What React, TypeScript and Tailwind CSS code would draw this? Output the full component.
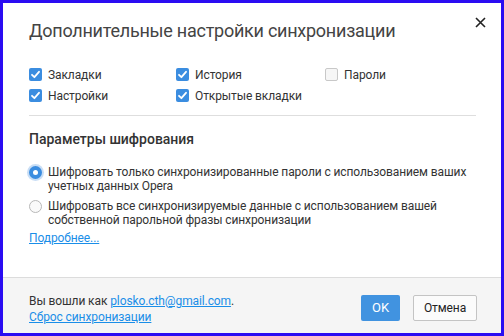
import React, { useState } from 'react';

type CheckProps = { label: string; checked: boolean; onToggle: () => void };

function Check({ label, checked, onToggle }: CheckProps) {
  return (
    <label className="flex items-center gap-[6px] cursor-pointer h-[21px] whitespace-nowrap" onClick={onToggle}>
      {checked ? (
        <span className="w-[13px] h-[13px] rounded-[2px] bg-[#3b8de0] flex items-center justify-center">
          <svg width="11" height="11" viewBox="0 0 11 11">
            <path d="M2 5.8 L4.4 8.2 L9 2.8" stroke="#fff" strokeWidth="1.8" fill="none" strokeLinecap="round" strokeLinejoin="round" />
          </svg>
        </span>
      ) : (
        <span className="w-[13px] h-[13px] rounded-[2px] border border-[#c8c8c8] bg-[#f6f6f6]" />
      )}
      <span>{label}</span>
    </label>
  );
}

type RadioProps = { lines: string[]; selected: boolean; onSelect: () => void };

function Radio({ lines, selected, onSelect }: RadioProps) {
  return (
    <div className="flex items-start gap-[6px] cursor-pointer" onClick={onSelect}>
      <span className="mt-[1px] w-[13px] h-[13px] shrink-0 flex items-center justify-center">
        {selected ? (
          <span className="w-[13px] h-[13px] rounded-full bg-[#3b8de0] ring-[2px] ring-[#c9def5] flex items-center justify-center">
            <span className="w-[5px] h-[5px] rounded-full bg-white" />
          </span>
        ) : (
          <span className="w-[13px] h-[13px] rounded-full border border-[#b8b8b8] bg-[#fafafa]" />
        )}
      </span>
      <div className="leading-[14px] whitespace-nowrap">
        {lines.map((l) => (
          <div key={l}>{l}</div>
        ))}
      </div>
    </div>
  );
}

export default function App() {
  const [checks, setChecks] = useState({
    bookmarks: true,
    history: true,
    passwords: false,
    settings: true,
    tabs: true,
  });
  const [mode, setMode] = useState<'passwords' | 'all'>('passwords');

  const toggle = (k: keyof typeof checks) => setChecks((p) => ({ ...p, [k]: !p[k] }));

  return (
    <div
      className="w-[504px] h-[336px] border-[3px] border-[#2a0cf2] bg-white text-[12px] tracking-[-0.1px] text-[#333] flex flex-col"
      style={{ fontFamily: 'Roboto, "Noto Sans", sans-serif' }}
    >
      <div className="relative flex-1 pl-[26px] pr-[25px]">
        <button className="absolute right-[14px] top-[12px] w-[14px] h-[14px] flex items-center justify-center">
          <svg width="11" height="11" viewBox="0 0 11 11">
            <path d="M1 1 L10 10 M10 1 L1 10" stroke="#222" strokeWidth="1.6" />
          </svg>
        </button>

        <h1 className="pt-[16px] text-[18px] tracking-[-0.25px] leading-[24px] text-[#444] font-normal whitespace-nowrap">
          Дополнительные настройки синхронизации
        </h1>

        <div className="mt-[21px] grid grid-cols-[147px_149px_1fr]">
          <Check label="Закладки" checked={checks.bookmarks} onToggle={() => toggle('bookmarks')} />
          <Check label="История" checked={checks.history} onToggle={() => toggle('history')} />
          <Check label="Пароли" checked={checks.passwords} onToggle={() => toggle('passwords')} />
          <Check label="Настройки" checked={checks.settings} onToggle={() => toggle('settings')} />
          <Check label="Открытые вкладки" checked={checks.tabs} onToggle={() => toggle('tabs')} />
        </div>

        <div className="mt-[9px] border-t border-[#dedede]" />

        <h2 className="mt-[14px] text-[14px] tracking-normal leading-[18px] font-medium text-[#333]">Параметры шифрования</h2>

        <div className="mt-[17px] flex flex-col gap-[6px]">
          <Radio
            lines={['Шифровать только синхронизированные пароли с использованием ваших', 'учетных данных Opera']}
            selected={mode === 'passwords'}
            onSelect={() => setMode('passwords')}
          />
          <Radio
            lines={['Шифровать все синхронизируемые данные с использованием вашей', 'собственной парольной фразы синхронизации']}
            selected={mode === 'all'}
            onSelect={() => setMode('all')}
          />
        </div>

        <a href="#" className="block mt-[3px] text-[#1a8ee8] underline leading-[16px]">
          Подробнее...
        </a>
      </div>

      <div className="h-[56px] shrink-0 border-t border-[#dcdcdc] bg-[#f5f5f5] pl-[26px] pr-[24px] flex items-center justify-between">
        <div className="leading-[16px] mt-[6px]">
          <div>
            Вы вошли как{' '}
            <a href="#" className="text-[#1a8ee8] underline">
              plosko.cth@gmail.com
            </a>
            .
          </div>
          <a href="#" className="text-[#1a8ee8] underline">
            Сброс синхронизации
          </a>
        </div>
        <div className="flex gap-[13px] mt-[4px]">
          <button className="w-[39px] h-[26px] rounded-[2px] bg-[#4193e0] text-white text-[13px]">OK</button>
          <button className="w-[64px] h-[26px] rounded-[2px] border border-[#c4c4c4] bg-[#fbfbfb] text-[#222] text-[12px]">
            Отмена
          </button>
        </div>
      </div>
    </div>
  );
}
